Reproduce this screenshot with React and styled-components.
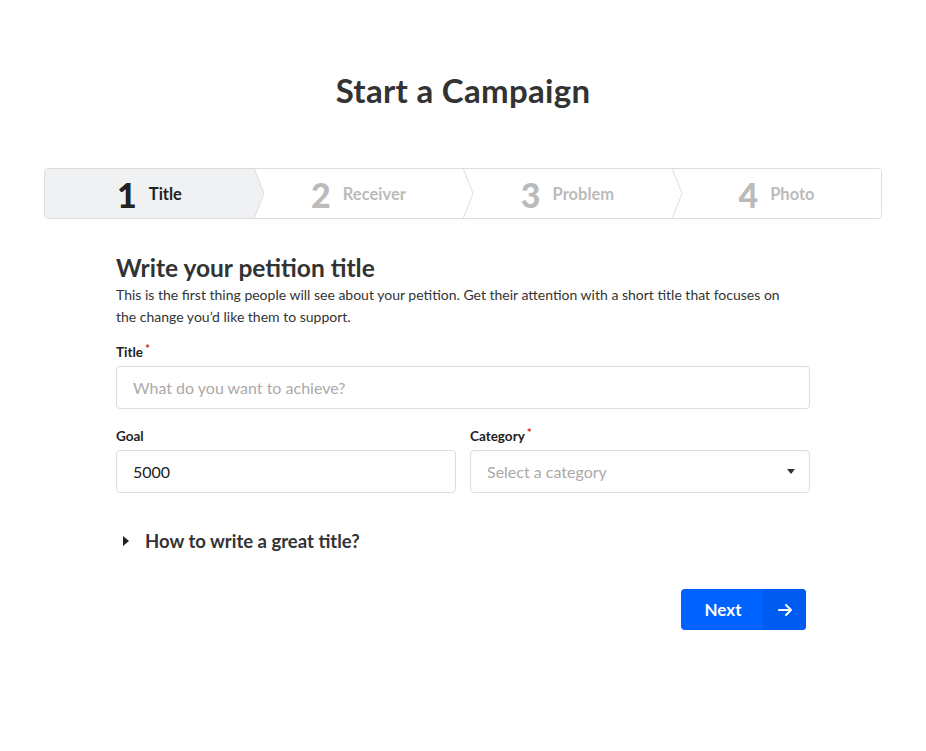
import React from 'react';
import styled, {createGlobalStyle} from 'styled-components';

const Global = createGlobalStyle`
  body {
    margin:0;
    background:#fff;
    font-family: Lato, "Noto Sans", sans-serif;
    color:#333;
  }
  * { box-sizing:border-box; }
`;

const Page = styled.div`
  width:926px;
  padding:70px 44px 0;
`;

const Heading = styled.h1`
  margin:0 0 58px;
  text-align:center;
  font-size:33px;
  font-weight:700;
  line-height:40px;
  color:#333;
  letter-spacing:0.3px;
`;

const Stepper = styled.div`
  display:flex;
  height:51px;
  border:1px solid #ddd;
  border-radius:4px;
  overflow:hidden;
`;

const Step = styled.div`
  position:relative;
  flex:1;
  display:flex;
  align-items:center;
  justify-content:center;
  gap:12px;
  background:${({active}) => active ? '#f0f1f3' : '#fff'};
  color:${({active}) => active ? '#222' : '#bbb'};
  z-index:${({z}) => z};
`;

const StepNum = styled.span`
  font-size:34px;
  font-weight:900;
  line-height:1;
  margin-top:3px;
`;

const StepLabel = styled.span`
  font-size:16.5px;
  font-weight:700;
`;

const Chevron = styled.svg`
  position:absolute;
  top:-1px;
  right:-11px;
`;

const Form = styled.div`
  width:694px;
  margin:35px auto 0;
`;

const FormTitle = styled.h2`
  margin:0;
  font-size:24.5px;
  font-weight:700;
  line-height:28px;
  color:#333;
`;

const Desc = styled.p`
  margin:2px 0 0;
  max-width:684px;
  font-size:14px;
  line-height:22px;
  color:#333;
`;

const Label = styled.label`
  display:block;
  font-size:13.5px;
  font-weight:700;
  color:#222;
  margin:${({top}) => top || 18}px 0 6px;
`;

const Star = styled.span`
  color:#e0161e;
  font-size:12px;
  vertical-align:top;
  margin-left:2px;
  position:relative;
  top:-3px;
`;

const Input = styled.input`
  display:block;
  width:100%;
  height:43px;
  border:1px solid #ddd;
  border-radius:4px;
  padding:0 16px;
  font-family:Lato, "Noto Sans", sans-serif;
  font-size:16px;
  color:#222;
  outline:none;
  &::placeholder { color:#aaa; }
`;

const Row = styled.div`
  display:grid;
  grid-template-columns:1fr 1fr;
  column-gap:14px;
`;

const Select = styled.div`
  display:flex;
  align-items:center;
  justify-content:space-between;
  height:43px;
  border:1px solid #ddd;
  border-radius:4px;
  padding:0 14px 0 16px;
  font-size:16px;
  color:#aaa;
`;

const Caret = styled.span`
  width:0;height:0;
  border-left:4.5px solid transparent;
  border-right:4.5px solid transparent;
  border-top:5px solid #333;
`;

const Toggle = styled.div`
  display:flex;
  align-items:center;
  gap:16px;
  margin:37px 0 0 7px;
  font-size:18.5px;
  font-weight:700;
  color:#333;
`;

const Tri = styled.span`
  width:0;height:0;
  border-top:5px solid transparent;
  border-bottom:5px solid transparent;
  border-left:6px solid #222;
`;

const Actions = styled.div`
  display:flex;
  justify-content:flex-end;
  margin-top:37px;
  padding-right:4px;
`;

const NextBtn = styled.button`
  display:flex;
  height:41px;
  width:125px;
  padding:0;
  border:none;
  border-radius:4px;
  overflow:hidden;
  background:#0062ff;
  color:#fff;
  font-family:Lato, "Noto Sans", sans-serif;
  font-size:17px;
  font-weight:700;
`;

const BtnText = styled.span`
  flex:1;
  display:flex;
  align-items:center;
  justify-content:center;
  padding-left:2px;
`;

const BtnIcon = styled.span`
  width:43px;
  display:flex;
  align-items:center;
  justify-content:center;
  background:#005cf0;
`;

const steps = [
  {n: 1, label: 'Title'},
  {n: 2, label: 'Receiver'},
  {n: 3, label: 'Problem'},
  {n: 4, label: 'Photo'},
];

export default function App(){
  return (
    <Page>
      <Global/>
      <Heading>Start a Campaign</Heading>
      <Stepper>
        {steps.map((s, i) => (
          <Step key={s.n} active={i === 0} z={10 - i}>
            <StepNum>{s.n}</StepNum>
            <StepLabel>{s.label}</StepLabel>
            {i < steps.length - 1 && (
              <Chevron width="12" height="51" viewBox="0 0 12 51">
                <polyline points="1,0 11,25.5 1,51" fill={i === 0 ? '#f0f1f3' : '#fff'} stroke="#ddd" strokeWidth="1"/>
              </Chevron>
            )}
          </Step>
        ))}
      </Stepper>

      <Form>
        <FormTitle>Write your petition title</FormTitle>
        <Desc>This is the first thing people will see about your petition. Get their attention with a short title that focuses on the change you’d like them to support.</Desc>

        <Label top={16}>Title<Star>*</Star></Label>
        <Input placeholder="What do you want to achieve?"/>

        <Row>
          <div>
            <Label top={19}>Goal</Label>
            <Input defaultValue="5000"/>
          </div>
          <div>
            <Label top={19}>Category<Star>*</Star></Label>
            <Select>Select a category<Caret/></Select>
          </div>
        </Row>

        <Toggle><Tri/>How to write a great title?</Toggle>

        <Actions>
          <NextBtn>
            <BtnText>Next</BtnText>
            <BtnIcon>
              <svg width="16" height="16" viewBox="0 0 16 16" fill="none" stroke="#fff" strokeWidth="2" strokeLinecap="round" strokeLinejoin="round">
                <path d="M2 8h12M9 3l5 5-5 5"/>
              </svg>
            </BtnIcon>
          </NextBtn>
        </Actions>
      </Form>
    </Page>
  );
}
